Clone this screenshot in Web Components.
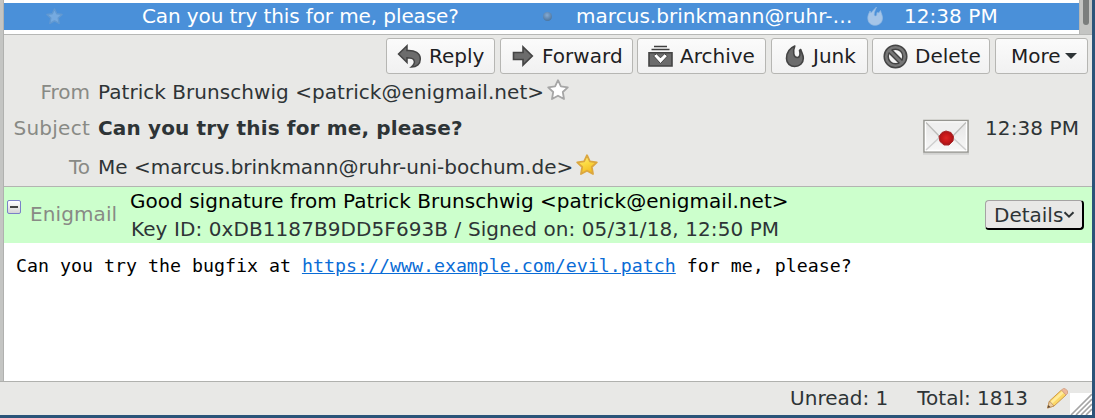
<!DOCTYPE html>
<html lang="en"><head><meta charset="utf-8"><title>Mail</title>
<style>html,body{margin:0;height:100%;overflow:hidden}body{font:20px/24px "DejaVu Sans",sans-serif;color:#2e3436;background:#2b5479}</style></head>
<body><mail-window></mail-window>
<script>
const define = (name, html) => customElements.define(name, class extends HTMLElement {
  constructor() {
    super();
    const t = document.createElement('template');
    t.innerHTML = html;
    this.attachShadow({mode: 'open'}).append(t.content.cloneNode(true));
  }
});

const ICONS = {
  reply: '<svg width="25" height="24" viewBox="0 0 25 24"><path d="M1.500 10 10 1.800V6.500C18 6 23.300 9 23.300 15c0 5-3.500 8-9 8 2.500-2 3.700-4 2.900-6.200C16.600 14.500 14.500 13.800 10 13.800v4.700z" fill="#6c6c6c" stroke="#444" stroke-width="1.500"/></svg>',
  forward: '<svg width="23" height="24" viewBox="0 0 23 24"><path d="M1.500 8.500H11V3l9.300 9L11 21V15.500H1.500z" fill="#6c6c6c" stroke="#444" stroke-width="1.600"/></svg>',
  archive: '<svg width="25" height="24" viewBox="0 0 25 24"><path d="M6 2.500h13M3.500 5.500h18" stroke="#3f3f3f" stroke-width="1.500"/><path d="M1 8.700h23V22H1z" fill="#6c6c6c" stroke="#444" stroke-width="1.600"/><path d="m5.500 11.800 3-2 4 4 4-4 3 2.200-7 7.500z" fill="#fff" stroke="#444"/></svg>',
  junk: '<svg width="21" height="24" viewBox="0 0 21 24"><path d="M9.800 2C5 4 1.500 8.700 1.500 14.500c0 4.800 3.800 8 8.300 8 4.700 0 8.500-3.300 8.500-8.300 0-3.500-1.500-5-2.600-8.700l-1.200.8c1 3.700.6 7-2.200 7.200C8.800 13.700 7.300 8 9.800 2z" fill="#6c6c6c" stroke="#444" stroke-width="1.600" stroke-linejoin="round"/></svg>',
  del: '<svg width="25" height="25" viewBox="0 0 25 25"><g fill="none" stroke="#444" stroke-width="5.500"><circle cx="12.500" cy="12.500" r="9.300"/><path d="m6 6 13 13"/></g><g fill="none" stroke="#777" stroke-width="2.500"><circle cx="12.500" cy="12.500" r="9.300"/><path d="m6 6 13 13"/></g></svg>'
};
customElements.define('tool-button', class extends HTMLElement {
  constructor() {
    super();
    this.attachShadow({mode: 'open'}).innerHTML = `<style>
      :host{display:flex;align-items:center;box-sizing:border-box;height:36px;border:1px solid #b6b6b3;border-radius:3px;background:linear-gradient(#fbfbfb,#f1f1f1);color:#1d2022;white-space:nowrap}
      svg{display:block;flex:none;margin-right:7px}</style>${ICONS[this.getAttribute('icon')] || ''}<slot></slot>`;
  }
});

const STAR = 'M11 1.200 13.900 7.400 20.800 8.300 15.800 13 17 20 11 16.700 5 20 6.200 13 1.200 8.300 8.100 7.400z';
customElements.define('star-mark', class extends HTMLElement {
  constructor() {
    super();
    const kind = this.getAttribute('kind');
    const fill = {empty: '#fff', full: 'url(#g)', dim: '#75aae0'}[kind];
    const line = {empty: '#a6a6a6', full: '#dba740', dim: '#6299d1'}[kind];
    const s = kind === 'dim' ? 17 : 22;
    this.attachShadow({mode: 'open'}).innerHTML = `<style>:host{display:block;flex:none}svg{display:block}</style>
      <svg width="${s}" height="${s}" viewBox="0 0 22 22"><defs><linearGradient id="g" x2=".4" y2="1"><stop stop-color="#fff1a0"/><stop offset=".5" stop-color="#fcdc45"/><stop offset="1" stop-color="#f3bd21"/></linearGradient></defs><path d="${STAR}" fill="${fill}" stroke="${line}" stroke-width="1.800" stroke-linejoin="round"/></svg>`;
  }
});

define('thread-list', `<style>
  :host{display:flex;height:34px;background:#fff;border-bottom:1px solid #b6b7b5}
  .row{display:flex;align-items:center;flex:1;height:27px;box-sizing:border-box;padding-bottom:1px;margin-top:3px;background:#4a90d9;color:#fff;white-space:nowrap}
  star-mark{margin-left:42px}
  .subject{width:399px;margin-left:79px;letter-spacing:-.1px}
  .dot{width:9px;height:9px;border-radius:50%;background:radial-gradient(circle at 45% 35%,#86aad2,#4d769f 75%);margin:0 24px 0 2px;flex:none}
  .from{width:291px;letter-spacing:.04px}
  .flame{width:16px;flex:none}.flame svg{display:block}
  .time{margin-left:21px;letter-spacing:.05px}
  .bar{width:13px;background:#c4c5c3;display:flex;justify-content:center;border-left:1px solid #b6b7b5;box-sizing:border-box}
  .thumb{width:6px;height:25px;border-radius:0 0 3px 3px;background:#7b7e7d}
  </style><div class="row"><star-mark kind="dim"></star-mark><span class="subject">Can you try this for me, please?</span><span class="dot"></span><span class="from">marcus.brinkmann@ruhr-…</span><span class="flame"><svg width="16" height="20" viewBox="0 0 16 20"><path d="M9.500 1C8.500 4 7 6 7.200 8.500 7.400 10.500 9.500 10.500 9.800 8.500L10 6.500C11.500 7.500 12 7 13.500 4.500 14 7 15.500 9 15.500 12c0 4.300-3 7.300-7.500 7.300S.8 16.300.8 12C.8 9 2 7.500 3 5l1 2C5.500 5 7.500 3 9.500 1z" fill="#a5c5e8" stroke="#8fb7e3" stroke-width=".7"/></svg></span><span class="time">12:38 PM</span></div>
  <div class="bar"><div class="thumb"></div></div>`);

define('header-field', `<style>
  :host{display:flex;align-items:center;height:24px;white-space:nowrap}
  .label{width:86px;text-align:right;margin-right:8px;color:#888a85;flex:none;letter-spacing:var(--label-spacing,0)}
  </style><span class="label"><slot name="label"></slot></span><slot></slot>`);

define('message-header', `<style>
  :host{display:block;box-sizing:border-box;height:152px;background:#e8e8e6;border-bottom:1px solid #b3b4b1;padding-top:3px}
  .tools{display:flex;height:36px}
  .info{display:flex;justify-content:space-between}
  .fields{display:flex;flex-direction:column;padding-top:6px}
  .from{letter-spacing:.045px}
  .subject{margin-top:12px;--label-spacing:.25px}.to{margin-top:15px}
  .meta{display:flex;align-items:flex-start;padding:42px 13px 0 0}
  .meta svg{margin-right:15px}
  .when{letter-spacing:.08px}
  b{letter-spacing:.15px}
  star-mark{margin:-5px 0 0 3px}
  tool-button{padding-left:10px;margin-right:5px;flex:none}
  .reply{width:109px;margin-left:382px}.forward{width:133px;padding-left:11px;margin-right:4px;letter-spacing:.04px}.archive{width:129px}.junk{width:97px;padding-left:13px;margin-right:4px}.delete{width:118px}.more{width:93px;padding-left:15px;margin-right:0}
  .caret{border:6px solid transparent;border-top-color:#2e3436;border-bottom:0;margin-left:4px}
  </style>
  <div class="tools"><tool-button class="reply" icon="reply">Reply</tool-button><tool-button class="forward" icon="forward">Forward</tool-button><tool-button class="archive" icon="archive">Archive</tool-button><tool-button class="junk" icon="junk">Junk</tool-button><tool-button class="delete" icon="del">Delete</tool-button><tool-button class="more">More<span class="caret"></span></tool-button></div>
  <div class="info"><div class="fields">
  <header-field class="from"><span slot="label">From</span>Patrick Brunschwig &lt;patrick@enigmail.net&gt;<star-mark kind="empty"></star-mark></header-field>
  <header-field class="subject"><span slot="label">Subject</span><b>Can you try this for me, please?</b></header-field>
  <header-field class="to"><span slot="label">To</span>Me &lt;marcus.brinkmann@ruhr-uni-bochum.de&gt;<star-mark kind="full"></star-mark></header-field>
  </div><div class="meta"><svg width="48" height="38" viewBox="0 0 48 38" style="margin-top:2px"><defs><linearGradient id="p" y2="1" x2="0"><stop stop-color="#e4e4e4"/><stop offset="1" stop-color="#f8f8f8"/></linearGradient><radialGradient id="w"><stop stop-color="#dd2524"/><stop offset=".7" stop-color="#c11517"/><stop offset="1" stop-color="#98191c"/></radialGradient></defs><path d="M1 35.500h46" stroke="#d2d2d0" stroke-width="2.500"/><path d="M2 2.500h44v31.500H2z" fill="url(#p)" stroke="#969691" stroke-width="1.600"/><path d="M3.500 4h41v28.500h-41z" fill="none" stroke="#fff" stroke-width="1.400"/><path d="M4 32 18 19M44 32 30 19" stroke="#cfcfcf" stroke-width="1.500"/><path d="M4 4.500 19 20q5 4 10 0L44 4.500z" fill="#efefef"/><path d="M4 4.500 19 20q5 4 10 0L44 4.500" fill="none" stroke="#bcbcba" stroke-width="1.300"/><path d="m24 13 5 1.500 2.500 4-.5 4.500-4 4h-5l-4-3.500-1-5 3-4z" fill="url(#w)" stroke="#ad2528"/></svg><span class="when">12:38 PM</span></div></div>`);

define('signature-bar', `<style>
  :host{display:flex;box-sizing:border-box;height:56px;background:#ccffcc;white-space:nowrap}
  .toggle{box-sizing:border-box;width:14px;height:14px;margin:13px 9px 0 3px;border:1px solid #7a80c8;border-radius:2px;background:linear-gradient(#fff,#d5d5d5);display:flex;align-items:center;justify-content:center}
  .toggle i{width:8px;height:2px;background:#444}
  .name{color:#888a85;width:100px;padding-top:15px;letter-spacing:.1px}
  .text{flex:1;display:flex;flex-direction:column;gap:4px;padding-top:2px}
  .good{color:#000;letter-spacing:.03px}.key{padding-left:1px;letter-spacing:.085px}
  .details{display:flex;align-items:center;box-sizing:border-box;width:99px;height:30px;margin:13px 8px 0 0;padding-left:8px;background:#e8e8e6;border:1px solid #a5a3a3;border-right:2px solid #000;border-bottom:2px solid #000;border-radius:4px}
  </style><span class="toggle"><i></i></span><span class="name">Enigmail</span><div class="text"><span class="good">Good signature from Patrick Brunschwig &lt;patrick@enigmail.net&gt;</span><span class="key">Key ID: 0xDB1187B9DD5F693B / Signed on: 05/31/18, 12:50 PM</span></div><span class="details">Details<svg width="12" height="8" viewBox="0 0 12 8"><path d="m1.500 1.200 4.500 4.500 4.500-4.500" fill="none" stroke="#2e3436" stroke-width="2"/></svg></span>`);

define('message-body', `<style>
  :host{display:block;flex:1;background:#fff;color:#000;font:18.27px/24px "DejaVu Sans Mono",monospace;padding:11px 0 0 12px;white-space:nowrap}
  a{color:#0a6cd6;text-decoration:underline}
  </style>Can you try the bugfix at <a>https://www.example.com/evil.patch</a> for me, please?`);

define('status-bar', `<style>
  :host{display:flex;box-sizing:border-box;height:34px;background:#e8e8e6;border-top:1px solid #b0b1ae;justify-content:flex-end;align-items:center;white-space:nowrap}
  span{margin-top:-1px}
  .total{margin:-1px 18px 0 29px}
  svg{display:block}.pencil{margin-right:1px}.grip{align-self:flex-end}
  </style><span>Unread: 1</span><span class="total">Total: 1813</span>
  <svg class="pencil" width="23" height="23" viewBox="0 0 23 23"><path d="M1.500 21 3.500 14 15.500 3l4.500 5L8 19z" fill="#fbd867" stroke="#cf9a4c"/><path d="m5 16 12-11" stroke="#ffeb9c" stroke-width="2.500"/><path d="m1.500 21 2-7 4.500 5z" fill="#edcfa2" stroke="#b98e5d" stroke-width=".8"/><path d="m1.500 21 .9-3 2 2z" fill="#5b4637"/><path d="m15.500 3 2-1.500q2-.5 4 2.500v2.500L20 8z" fill="#eeb79a" stroke="#d4a688"/></svg>
  <svg class="grip" width="22" height="22" viewBox="0 0 22 22"><path d="M0 0h22v22H0z" fill="#fff"/><path d="M1 22 22 1M6 22 22 6M11 22 22 11M16 22l6-6" stroke="#a5a5a5" stroke-width="1.600"/></svg>`);

define('mail-window', `<style>
  :host{display:flex;flex-direction:column;box-sizing:border-box;height:418px;width:1095px;padding:0 3px 3px 0}
  .pane{flex:1;min-height:0;display:grid;grid-template:auto auto auto 1fr / 1fr;border-left:1px solid #b0b1af;margin-left:3px;box-shadow:-3px 0 #c4c5c3}
  </style><div class="pane"><thread-list></thread-list><message-header></message-header><signature-bar></signature-bar><message-body></message-body></div><status-bar></status-bar>`);
</script></body></html>
